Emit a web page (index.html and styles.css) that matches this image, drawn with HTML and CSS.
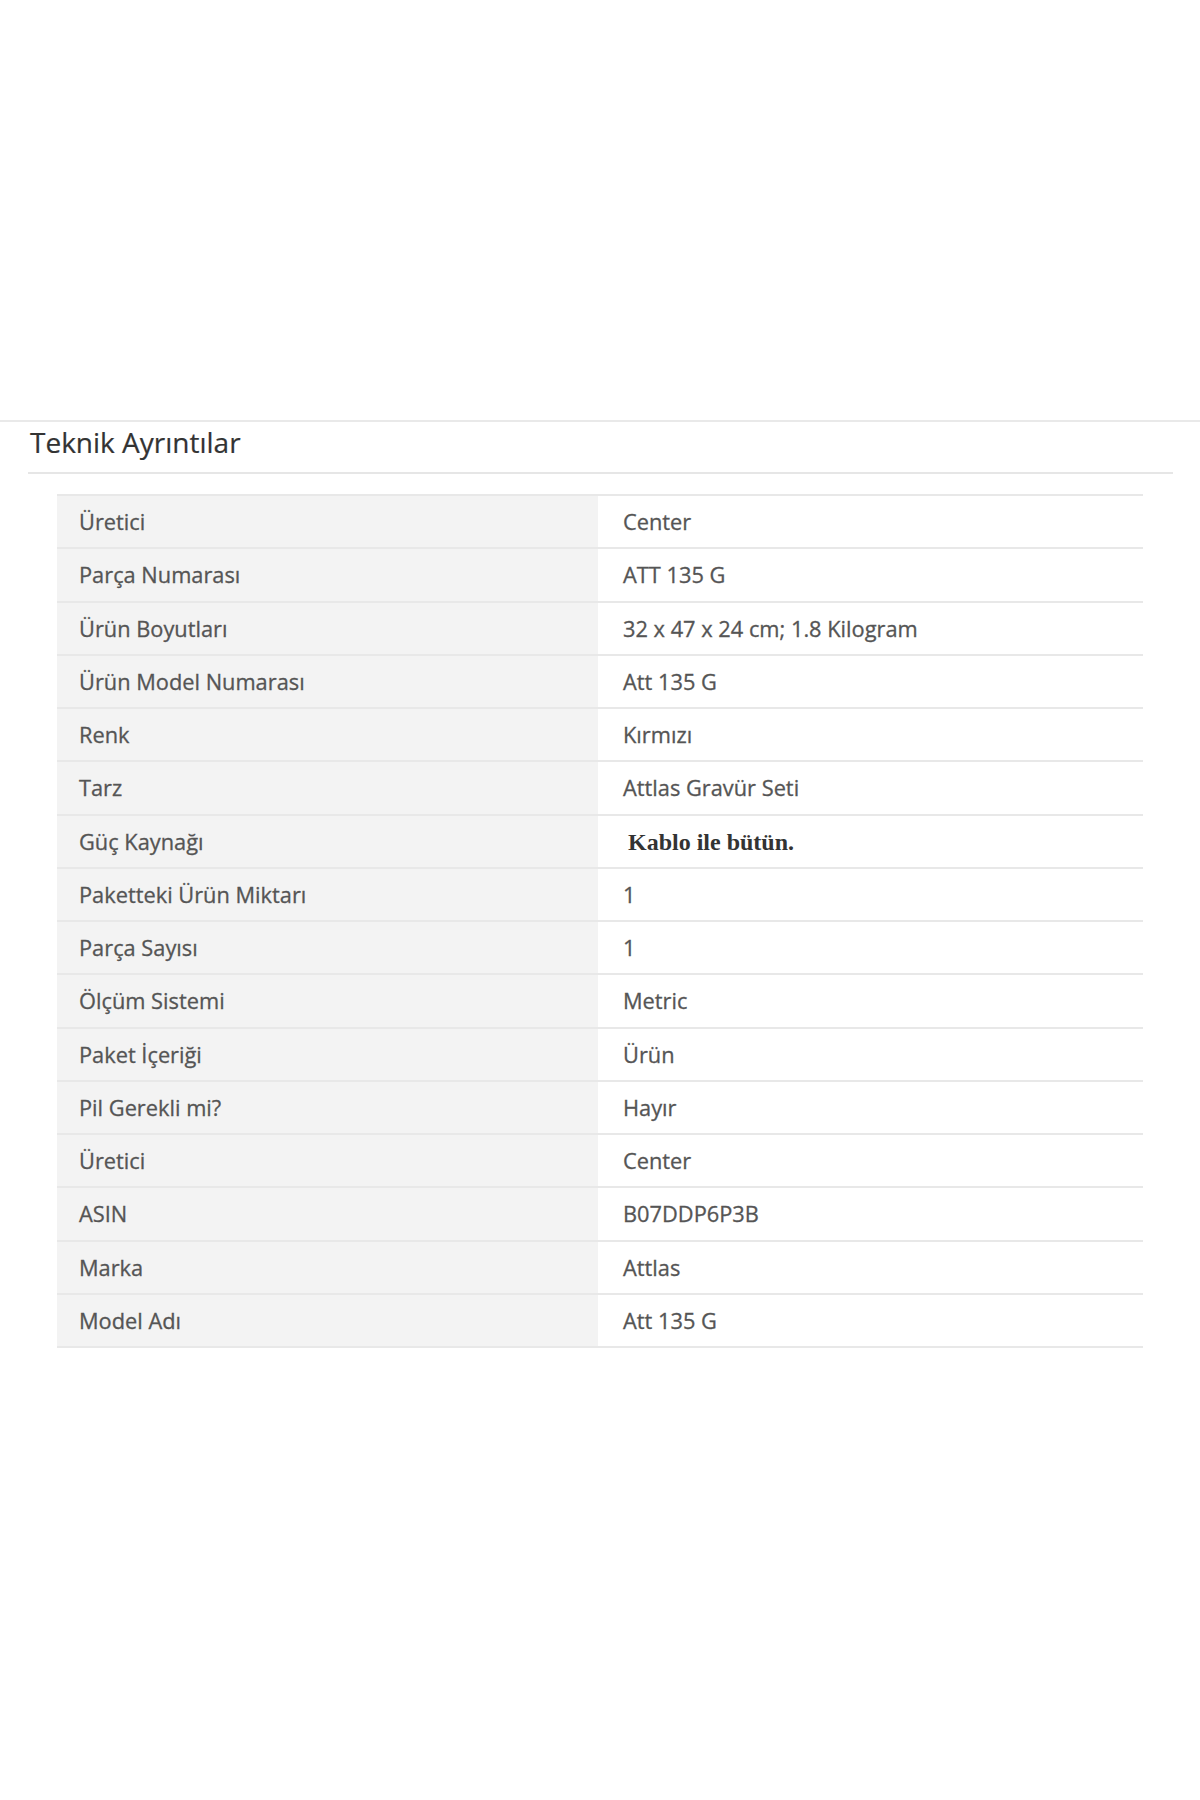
FILE: index.html
```html
<!DOCTYPE html>
<html lang="tr">
<head>
<meta charset="utf-8">
<title>Teknik Ayrıntılar</title>
<link rel="stylesheet" href="styles.css">
</head>
<body>
<section class="tech">
  <h2 class="tech-title">Teknik Ayrıntılar</h2>
  <table class="spec">
    <tbody>
      <tr><th>Üretici</th><td>Center</td></tr>
      <tr><th>Parça Numarası</th><td>ATT 135 G</td></tr>
      <tr><th>Ürün Boyutları</th><td>32 x 47 x 24 cm; 1.8 Kilogram</td></tr>
      <tr><th>Ürün Model Numarası</th><td>Att 135 G</td></tr>
      <tr><th>Renk</th><td>Kırmızı</td></tr>
      <tr><th>Tarz</th><td>Attlas Gravür Seti</td></tr>
      <tr><th>Güç Kaynağı</th><td><span class="serif">Kablo ile bütün.</span></td></tr>
      <tr><th>Paketteki Ürün Miktarı</th><td>1</td></tr>
      <tr><th>Parça Sayısı</th><td>1</td></tr>
      <tr><th>Ölçüm Sistemi</th><td>Metric</td></tr>
      <tr><th>Paket İçeriği</th><td>Ürün</td></tr>
      <tr><th>Pil Gerekli mi?</th><td>Hayır</td></tr>
      <tr><th>Üretici</th><td>Center</td></tr>
      <tr><th>ASIN</th><td>B07DDP6P3B</td></tr>
      <tr><th>Marka</th><td>Attlas</td></tr>
      <tr><th>Model Adı</th><td>Att 135 G</td></tr>
    </tbody>
  </table>
</section>
</body>
</html>
```
FILE: styles.css
```css
html, body {
  margin: 0;
  padding: 0;
  background: #ffffff;
}
body {
  font-family: "Open Sans", "Liberation Sans", sans-serif;
  color: #565656;
  padding-top: 420px;
}
.tech {
  border-top: 2px solid #e9e9e9;
}
.tech-title {
  margin: 0 27px 0 28px;
  padding: 3px 0 13px 2px;
  font-size: 28px;
  line-height: 34px;
  font-weight: 400;
  color: #333333;
  border-bottom: 2px solid #e6e6e6;
  -webkit-text-stroke: 0.2px #333333;
}
.spec {
  margin: 20px 0 0 57px;
  width: 1086px;
  border-collapse: collapse;
  table-layout: fixed;
  font-size: 21.8px;
}
.spec tr {
  border-top: 2px solid #e8e8e8;
}
.spec tr:last-child {
  border-bottom: 2px solid #e8e8e8;
}
.spec th,
.spec td {
  height: 51.25px;
  padding: 0 0 0 22px;
  text-align: left;
  font-weight: 400;
  vertical-align: middle;
  color: #555555;
  -webkit-text-stroke: 0.3px #555555;
}
.spec th {
  width: 519px;
  background: #f3f3f3;
}
.spec td {
  background: #ffffff;
  padding-left: 25px;
}
.serif {
  font-family: "Liberation Serif", "Times New Roman", serif;
  font-weight: 700;
  color: #333333;
  -webkit-text-stroke: 0;
  font-size: 24px;
  margin-left: 5px;
}
```
